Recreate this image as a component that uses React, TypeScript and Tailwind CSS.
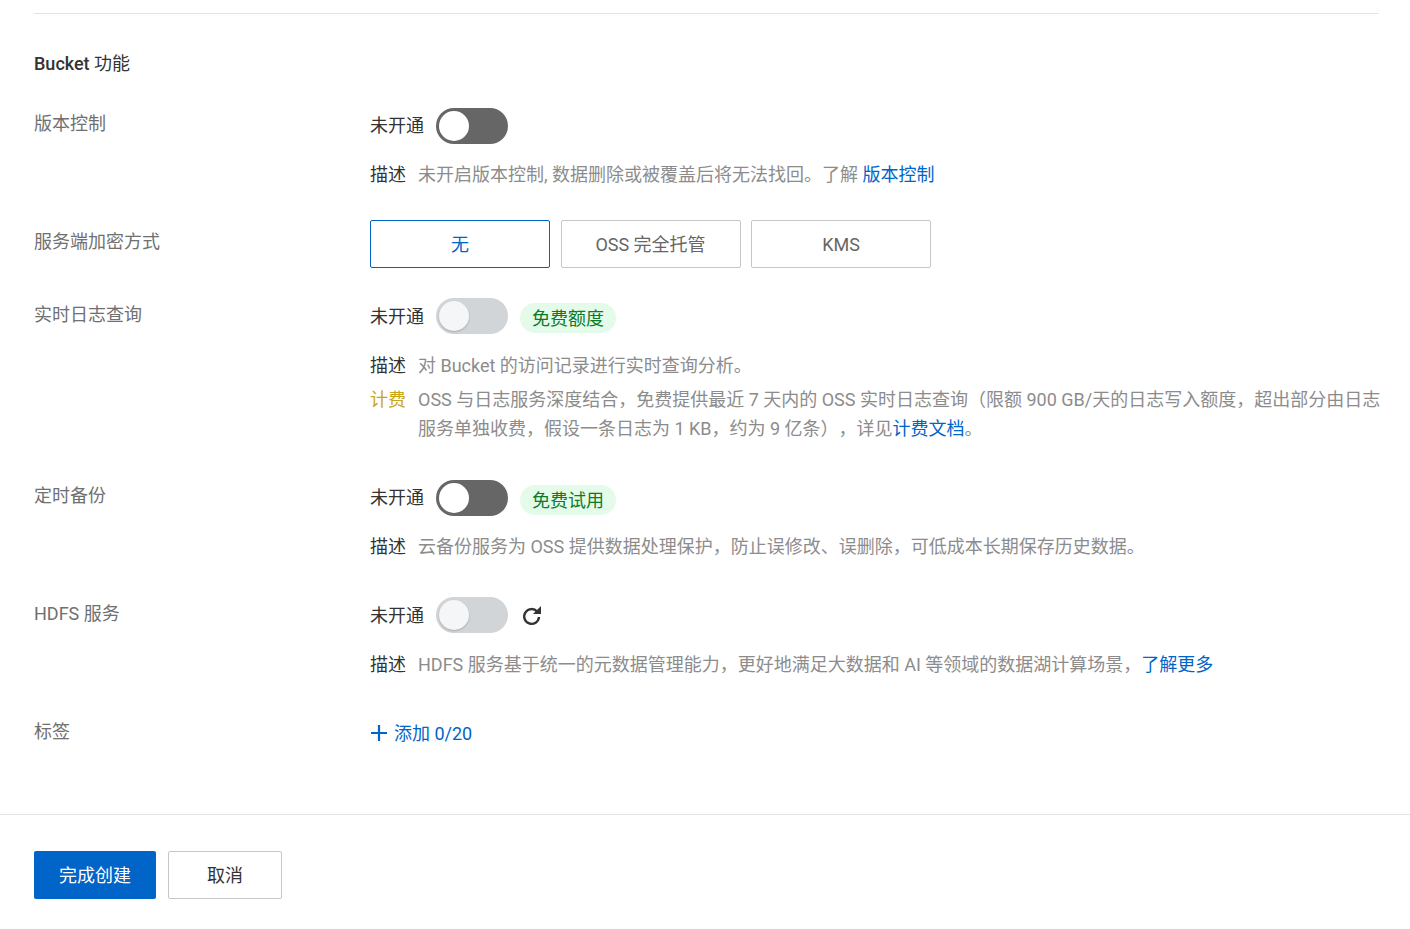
import type { ReactNode } from "react";

function Toggle({ disabled = false }: { disabled?: boolean }) {
  return (
    <span className={"flex h-[36px] w-[72px] items-center rounded-full px-[3px] " + (disabled ? "bg-[#d1d5d8]" : "bg-[#666666]")}>
      <span className={"h-[30px] w-[30px] rounded-full " + (disabled ? "bg-[#f5f6f7] shadow-[0_1px_2px_rgba(0,0,0,0.2)]" : "bg-white")} />
    </span>
  );
}

function Badge({ children }: { children: ReactNode }) {
  return <span className="ml-[12px] mt-[3px] flex h-[30px] items-center rounded-full bg-[#e5fbe9] px-[12px] pt-[2px] text-[#0a7a2c]">{children}</span>;
}

function Status({ disabled, children }: { disabled?: boolean; children?: ReactNode }) {
  return (
    <div className="flex h-[36px] items-center">
      <span className={"mr-[12px] text-[#333333] " + (disabled ? "" : "mb-[2px]")}>未开通</span>
      <Toggle disabled={disabled} />
      {children}
    </div>
  );
}

function Note({ label, tone = "text-[#333333]", className = "", children }: { label: string; tone?: string; className?: string; children: ReactNode }) {
  return (
    <div className={"flex leading-[29px] " + className}>
      <span className={"w-[48px] shrink-0 " + tone}>{label}</span>
      <div className="whitespace-nowrap text-[#8c8c8c]">{children}</div>
    </div>
  );
}

function Row({ label, className = "", labelClass = "mt-[1px]", children }: { label: string; className?: string; labelClass?: string; children: ReactNode }) {
  return (
    <div className={"flex " + className}>
      <div className={"w-[336px] shrink-0 leading-[29px] text-[#707070] " + labelClass}>{label}</div>
      <div className="min-w-0 flex-1">{children}</div>
    </div>
  );
}

function Choice({ active, children }: { active?: boolean; children: ReactNode }) {
  return (
    <div className={"flex h-[48px] w-[180px] items-center justify-center rounded-[2px] border " + (active ? "border-[#0064c8] text-[#0064c8]" : "border-[#c4c6cc] text-[#666666]")}>
      {children}
    </div>
  );
}

const Link = ({ children }: { children: ReactNode }) => <span className="text-[#0064c8]">{children}</span>;

export default function App() {
  return (
    <div className="h-[929px] overflow-hidden bg-white pt-[13px] text-[18px] font-['Roboto','Noto_Sans_CJK_SC',sans-serif] [text-spacing-trim:space-all]">
      <div className="ml-[34px] mr-[31px] border-t border-[#e3e4e6]">
        <h2 className="mt-[35px] text-[18px] leading-[29px] text-[#333333]">
          <span className="font-medium">Bucket</span> 功能
        </h2>

        <Row label="版本控制" className="mt-[30px]">
          <Status />
          <Note label="描述" className="mt-[16px]">
            未开启版本控制, 数据删除或被覆盖后将无法找回。了解 <Link>版本控制</Link>
          </Note>
        </Row>

        <Row label="服务端加密方式" className="mt-[31px]" labelClass="mt-[7px]">
          <div className="flex gap-[10.5px]">
            <Choice active>无</Choice>
            <Choice>OSS 完全托管</Choice>
            <Choice>KMS</Choice>
          </div>
        </Row>

        <Row label="实时日志查询" className="mt-[30px]" labelClass="mt-[2px]">
          <Status disabled>
            <Badge>免费额度</Badge>
          </Status>
          <Note label="描述" className="mt-[17px]">
            对 Bucket 的访问记录进行实时查询分析。
          </Note>
          <Note label="计费" tone="text-[#c9a616]" className="mt-[5px]">
            OSS 与日志服务深度结合，免费提供最近 7 天内的 OSS 实时日志查询（限额 900 GB/天的日志写入额度，超出部分由日志
            <br />
            服务单独收费，假设一条日志为 1 KB，约为 9 亿条），详见<Link>计费文档</Link>。
          </Note>
        </Row>

        <Row label="定时备份" className="mt-[37px]">
          <Status>
            <Badge>免费试用</Badge>
          </Status>
          <Note label="描述" className="mt-[16px]">
            云备份服务为 OSS 提供数据处理保护，防止误修改、误删除，可低成本长期保存历史数据。
          </Note>
        </Row>

        <Row label="HDFS 服务" className="mt-[36px]" labelClass="mt-[2px]">
          <Status disabled>
            <svg className="ml-[12px] h-[24px] w-[24px] text-[#333333]" viewBox="0 0 24 24" fill="none">
              <path d="M17.2 8.6A7.4 7.4 0 1 0 19 14" stroke="currentColor" strokeWidth="2.4" />
              <path d="M13 11h8V3z" fill="currentColor" />
            </svg>
          </Status>
          <Note label="描述" className="mt-[17px]">
            HDFS 服务基于统一的元数据管理能力，更好地满足大数据和 AI 等领域的数据湖计算场景，<Link>了解更多</Link>
          </Note>
        </Row>

        <Row label="标签" className="mt-[37px]">
          <div className="flex h-[34px] items-center text-[#0064c8]">
            <svg className="ml-[1px] mr-[7px] h-[16px] w-[16px]" viewBox="0 0 16 16" fill="none">
              <path d="M8 0v16M0 8h16" stroke="currentColor" strokeWidth="2.2" />
            </svg>
            添加 0/20
          </div>
        </Row>
      </div>

      <div className="mt-[64px] border-t border-[#e3e4e6] px-[34px] pt-[36px]">
        <div className="flex gap-[12px]">
          <button className="h-[48px] w-[122px] rounded-[2px] bg-[#0064c8] text-white">完成创建</button>
          <button className="h-[48px] w-[114px] rounded-[2px] border border-[#c4c6cc] text-[#333333]">取消</button>
        </div>
      </div>
    </div>
  );
}
